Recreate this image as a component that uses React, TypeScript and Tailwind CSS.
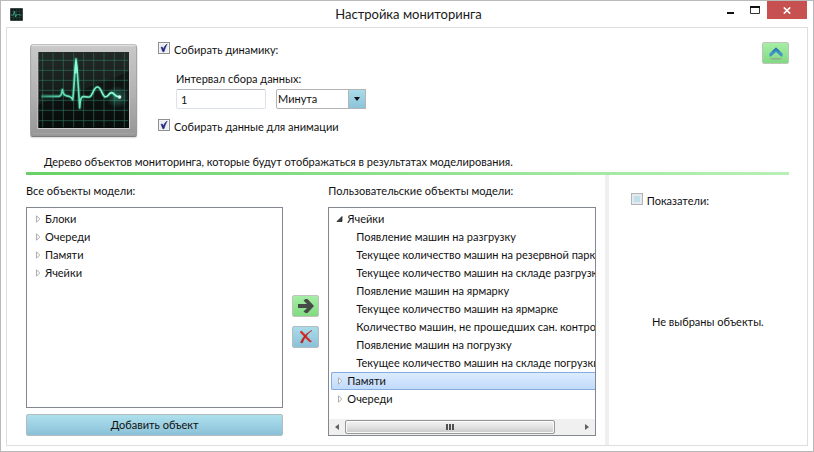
import { useState } from 'react'
import type { ReactNode } from 'react'

interface TreeNode {
    title: string
    children?: string[]
}

const modelObjects: TreeNode[] = [
    { title: 'Блоки' },
    { title: 'Очереди' },
    { title: 'Памяти' },
    { title: 'Ячейки' },
]

const userObjects: TreeNode[] = [
    {
        title: 'Ячейки',
        children: [
            'Появление машин на разгрузку',
            'Текущее количество машин на резервной парк',
            'Текущее количество машин на складе разгрузк',
            'Появление машин на ярмарку',
            'Текущее количество машин на ярмарке',
            'Количество машин, не прошедших сан. контро.',
            'Появление машин на погрузку',
            'Текущее количество машин на складе погрузки',
        ],
    },
    { title: 'Памяти' },
    { title: 'Очереди' },
]

function MonitorIcon() {
    const trace = 'M62 181 H114 C120 181 122 178 125 161 C128 178 133 179 145 181 C151 182 153 184 156 191 C161 155 162 100 166 69 C170 100 174 165 177 216 C179 190 180 183 187 182 C197 181 201 185 208 182 C217 177 219 153 230 153 C242 153 243 176 252 182 C263 186 264 170 273 170 C282 171 280 183 298 183'
    return (
        <svg viewBox="22 18 330 294" className="h-[98px] w-[110px] shrink-0" aria-hidden="true">
            <defs>
                <linearGradient id="bezel" x1="0" y1="0" x2="0" y2="1">
                    <stop offset="0" stopColor="#c9c9c9" />
                    <stop offset="0.5" stopColor="#b4b4b4" />
                    <stop offset="1" stopColor="#979797" />
                </linearGradient>
                <linearGradient id="screen" x1="0" y1="0" x2="0" y2="1">
                    <stop offset="0" stopColor="#222926" />
                    <stop offset="1" stopColor="#0b1210" />
                </linearGradient>
                <linearGradient id="trace" gradientUnits="userSpaceOnUse" x1="60" y1="0" x2="300" y2="0">
                    <stop offset="0" stopColor="#2f8f72" />
                    <stop offset="0.3" stopColor="#64e0b6" />
                    <stop offset="1" stopColor="#8dffd8" />
                </linearGradient>
                <radialGradient id="glow">
                    <stop offset="0" stopColor="#5af0c0" stopOpacity="0.35" />
                    <stop offset="1" stopColor="#5af0c0" stopOpacity="0" />
                </radialGradient>
            </defs>
            <rect x="28" y="30" width="322" height="277" rx="8" fill="#000" opacity="0.12" />
            <rect x="30" y="30" width="318" height="273" rx="6" fill="#6f6f6f" />
            <rect x="30" y="26" width="318" height="274" rx="6" fill="url(#bezel)" stroke="#9a9a9a" strokeWidth="2" />
            <path d="M34 29 H344" stroke="#e6e6e6" strokeWidth="3" />
            <path d="M36 292 H342" stroke="#aaa" strokeWidth="2" />
            <rect x="50" y="46" width="278" height="233" fill="#c9c9c9" />
            <rect x="53" y="48" width="272" height="228" fill="url(#screen)" />
            <path d="M53 206 C150 166 240 150 325 106 V276 H53 Z" fill="#000" opacity="0.3" />
            <path
                d="M66 50V274M97 50V274M128 50V274M159 50V274M189 50V274M219 50V274M250 50V274M281 50V274M311 50V274M55 73H323M55 103H323M55 133H323M55 163H323M55 193H323M55 223H323M55 254H323"
                fill="none" stroke="#2f7762" strokeWidth="3" opacity="0.6"
            />
            <circle cx="290" cy="183" r="34" fill="url(#glow)" />
            <path d={trace} fill="none" stroke="#3ecb9c" strokeWidth="12" strokeLinejoin="round" opacity="0.25" />
            <path d={trace} fill="none" stroke="url(#trace)" strokeWidth="5" strokeLinejoin="round" />
            <path d="M163 112 L166 76 L170 112" fill="none" stroke="#8dffd8" strokeWidth="5" />
            <circle cx="297" cy="183" r="5" fill="#e2fff5" />
        </svg>
    )
}

function AppIcon() {
    return (
        <svg viewBox="0 0 13 13" className="size-[13px]" aria-hidden="true">
            <rect width="13" height="13" rx="1" fill="#3d4644" />
            <rect x="1" y="1" width="11" height="11" fill="#111c19" />
            <path d="M3.5 1V12M6.5 1V12M9.5 1V12M1 3.5H12M1 9.5H12" stroke="#244a40" strokeWidth="0.5" />
            <path d="M1 7H3.5L4.5 3L5.5 9L6 7H7.5L8.5 6L9.5 7H11.5" fill="none" stroke="#3fa78a" strokeWidth="0.9" />
        </svg>
    )
}

interface CheckBoxProps {
    label: string
    defaultChecked?: boolean
    disabled?: boolean
}

function CheckBox({ label, defaultChecked, disabled }: CheckBoxProps) {
    return (
        <label className="flex w-fit items-start gap-1">
            <span className="relative flex">
                <input
                    type="checkbox"
                    defaultChecked={defaultChecked}
                    disabled={disabled}
                    className="peer size-3 appearance-none border border-[#8e8f8f] bg-[#e9edf1] shadow-[inset_0_0_0_1px_#f4f4f4] disabled:border-[#b1b3b4] disabled:bg-[#c3dfea] disabled:shadow-[inset_0_0_0_2px_#e3eaee]"
                />
                <svg viewBox="0 0 12 12" className="pointer-events-none absolute inset-0 hidden size-3 peer-checked:block">
                    <path d="M3 5.2L4.3 5L5.3 7.2C6.2 4.8 7.3 3.2 9.2 2C8 4 7 6.5 6 9.8H4.8Z" fill="#23237c" stroke="#23237c" strokeWidth="0.5" />
                </svg>
            </span>
            <span className="leading-4">{label}</span>
        </label>
    )
}

function Expander({ open }: { open?: boolean }) {
    return (
        <svg viewBox="0 0 7 8" className="h-2 w-[7px] shrink-0" aria-hidden="true">
            {open ? (
                <path d="M6 1.5V6.5H1Z" fill="#404040" stroke="#262626" strokeWidth="0.8" />
            ) : (
                <path d="M2.5 0.8V7.2L5.8 4Z" fill="#fff" stroke="#a5a5a5" strokeWidth="0.9" />
            )}
        </svg>
    )
}

function Tree({ nodes, selected, onSelect }: { nodes: TreeNode[]; selected?: string; onSelect?: (title: string) => void }) {
    return (
        <ul role="tree" className="py-0.5 pl-0.5">
            {nodes.map((node) => (
                <li key={node.title} role="treeitem" aria-selected={node.title === selected}>
                    <div
                        onClick={() => onSelect?.(node.title)}
                        className={`flex h-[18px] items-center gap-1 rounded-l-xs border border-r-0 pl-1 ${
                            node.title === selected
                                ? 'border-[#84acdd] bg-linear-to-b from-[#dcebfd] to-[#c1dbfc]'
                                : 'border-transparent'
                        }`}
                    >
                        <Expander open={!!node.children} />
                        {node.title}
                    </div>
                    {node.children && (
                        <ul role="group" className="pl-[25px]">
                            {node.children.map((child) => (
                                <li key={child} role="treeitem" className="h-[18px] leading-[18px] whitespace-nowrap">
                                    {child}
                                </li>
                            ))}
                        </ul>
                    )}
                </li>
            ))}
        </ul>
    )
}

function HorizontalScroll() {
    return (
        <div className="flex h-4 items-center bg-[#f0f0f0]">
            <button type="button" aria-label="Влево" className="flex h-4 w-4 shrink-0 items-center justify-center">
                <svg viewBox="0 0 4 6" className="h-1.5 w-1"><path d="M4 0V6L0 3Z" fill="#606060" /></svg>
            </button>
            <div className="flex flex-1">
                <div className="flex h-3.5 w-[90%] items-center justify-center gap-px rounded-xs border border-[#979797] bg-linear-to-b from-[#f3f3f3] via-[#e2e2e2] to-[#c8c8c8] shadow-[inset_0_0_0_1px_#f9f9f9]">
                    <span className="h-1.5 w-0.5 bg-[#505050]" />
                    <span className="h-1.5 w-0.5 bg-[#505050]" />
                    <span className="h-1.5 w-0.5 bg-[#505050]" />
                </div>
            </div>
            <button type="button" aria-label="Вправо" className="flex h-4 w-4 shrink-0 items-center justify-center">
                <svg viewBox="0 0 4 6" className="h-1.5 w-1"><path d="M0 0V6L4 3Z" fill="#606060" /></svg>
            </button>
        </div>
    )
}

function GreenButton({ label, children }: { label: string; children: ReactNode }) {
    return (
        <button type="button" aria-label={label} className="flex h-[22px] w-[27px] items-center justify-center rounded-xs border border-[#bcc4bc] bg-linear-to-b from-[#a6eea6] to-[#82da82]">
            {children}
        </button>
    )
}

function TitleBar() {
    return (
        <header className="grid h-[26px] grid-cols-[1fr_auto_1fr] pr-1.5 pl-[9px]">
            <div className="flex items-center"><AppIcon /></div>
            <h1 className="text-[13px] leading-[26px] text-[#1a1a1a]">Настройка мониторинга</h1>
            <div className="flex items-start justify-end">
                <button type="button" aria-label="Свернуть" className="flex h-[18px] w-6 items-center justify-center">
                    <svg viewBox="0 0 10 10" className="size-2.5"><path d="M1 8H8" stroke="#111" strokeWidth="2" /></svg>
                </button>
                <button type="button" aria-label="Развернуть" className="flex h-[18px] w-6 items-center justify-center">
                    <svg viewBox="0 0 10 10" className="size-2.5"><path d="M0.5 1V8.5H9.5V1" fill="none" stroke="#333" /><path d="M0 2H10" stroke="#111" strokeWidth="2" /></svg>
                </button>
                <button type="button" aria-label="Закрыть" className="flex h-[18px] w-10 items-center justify-center bg-[#c75050]">
                    <svg viewBox="0 0 8 7" className="h-[7px] w-2"><path d="M0.8 0.4L7.2 6.6M7.2 0.4L0.8 6.6" stroke="#fff" strokeWidth="1.6" /></svg>
                </button>
            </div>
        </header>
    )
}

export default function App() {
    const [selected, setSelected] = useState('Памяти')

    return (
        <div className="flex min-h-screen flex-col border border-[#b9b9b9] bg-white font-['Lato','Open_Sans',sans-serif] text-[11px] text-[#111]">
            <TitleBar />
            <main className="mx-[5px] mb-[5px] flex flex-1 flex-col border border-[#dedede] pl-[19px]">
                {/* Settings */}
                <section className="mr-[18px] border-b-3 border-transparent [border-image:linear-gradient(to_right,#66d266,#b9f0b9)_1]">
                    <div className="flex items-start pt-3.5">
                        <div className="pl-0.5"><MonitorIcon /></div>
                        <div className="flex-1 pl-5">
                            <CheckBox label="Собирать динамику:" defaultChecked />
                            <div className="pt-[13px] pb-2.5 pl-[18px]">
                                <label htmlFor="interval" className="block leading-4">Интервал сбора данных:</label>
                                <div className="flex gap-2.5 pt-0.5">
                                    <input
                                        id="interval"
                                        defaultValue="1"
                                        className="h-5 w-[90px] rounded-xs border border-[#dde1ea] border-t-[#b3b6bd] px-1"
                                    />
                                    <div className="relative flex">
                                        <select aria-label="Единица времени" className="h-5 w-[90px] appearance-none rounded-xs border border-[#b4b4b4] bg-white px-px">
                                            <option>Минута</option>
                                            <option>Час</option>
                                        </select>
                                        <span className="pointer-events-none absolute inset-y-0 right-0 flex w-[18px] items-center justify-center border border-[#b4b4b4] bg-linear-to-b from-[#a9dcea] to-[#8cc3da]">
                                            <svg viewBox="0 0 6 4" className="h-1 w-1.5"><path d="M0 0H6L3 4Z" fill="#111" /></svg>
                                        </span>
                                    </div>
                                </div>
                            </div>
                            <CheckBox label="Собирать данные для анимации" defaultChecked />
                        </div>
                        <GreenButton label="Свернуть настройки">
                            <svg viewBox="0 0 16 14" className="h-3.5 w-4">
                                <ellipse cx="8" cy="12.8" rx="6" ry="1" fill="#8fb48f" />
                                <path d="M1.5 7.5L8 1.5L14.5 7.5V10.5H13L8 6L3 10.5H1.5Z" fill="#3f93c6" />
                                <path d="M4.5 4.8L8 1.5L11.5 4.8V6.2L8 3.6L4.5 6.2Z" fill="#2b78a8" />
                            </svg>
                        </GreenButton>
                    </div>
                    <p className="pt-3.5 pb-0.5 pl-[18px] leading-4">
                        Дерево объектов мониторинга, которые будут отображаться в результатах моделирования.
                    </p>
                </section>

                {/* Object trees */}
                <section className="grid flex-1 grid-cols-[minmax(0,257fr)_45px_minmax(0,267fr)_13px_minmax(0,198fr)]">
                    <div className="flex flex-col gap-1.5 pt-2 pb-[9px]">
                        <h2 className="pb-0.5 leading-4">Все объекты модели:</h2>
                        <div className="flex-1 border border-[#828790]"><Tree nodes={modelObjects} /></div>
                        <button type="button" className="h-[22px] rounded-xs border border-[#b4bcc0] bg-linear-to-b from-[#aee0ec] to-[#8bc1d9]">
                            Добавить объект
                        </button>
                    </div>

                    <div className="flex flex-col items-center justify-center gap-[9px] pt-5.5">
                        <GreenButton label="Добавить">
                            <svg viewBox="0 0 16 14" className="h-3.5 w-4"><path d="M0 5H9L5.5 1.5L7.5 0H9.5L16 7L9.5 14H7.5L5.5 12.5L9 9H0Z" fill="#474b47" /></svg>
                        </GreenButton>
                        <button type="button" aria-label="Удалить" className="flex h-[22px] w-[27px] items-center justify-center rounded-xs border border-[#b4bcc0] bg-linear-to-b from-[#a9dcea] to-[#8bc1d9]">
                            <svg viewBox="0 0 14 14" className="size-3.5">
                                <path d="M1 2C2 1 3 1 4 2.5L12.5 11.5L11 12L9 10.5Z" fill="#d92a20" stroke="#d92a20" strokeWidth="0.6" />
                                <path d="M13 0.5C9.5 2.5 5 8 3.5 13L1.5 12.5C3.5 7.5 8 2.5 13 0.5Z" fill="#b9231c" stroke="#b9231c" strokeWidth="0.5" />
                            </svg>
                        </button>
                    </div>

                    <div className="flex min-w-0 flex-col gap-1.5 pt-2 pb-[9px]">
                        <h2 className="pb-0.5 leading-4">Пользовательские объекты модели:</h2>
                        <div className="flex flex-1 flex-col border border-[#828790]">
                            <div className="flex-1 overflow-hidden">
                                <Tree nodes={userObjects} selected={selected} onSelect={setSelected} />
                            </div>
                            <HorizontalScroll />
                        </div>
                    </div>

                    <div className="flex justify-end"><div className="w-1 bg-[#efefef]" /></div>

                    <div className="flex flex-col pt-[18px]">
                        <div className="pl-[22px]"><CheckBox label="Показатели:" disabled /></div>
                        <p className="flex flex-1 items-center justify-center pb-[9px]">Не выбраны объекты.</p>
                    </div>
                </section>
            </main>
        </div>
    )
}
